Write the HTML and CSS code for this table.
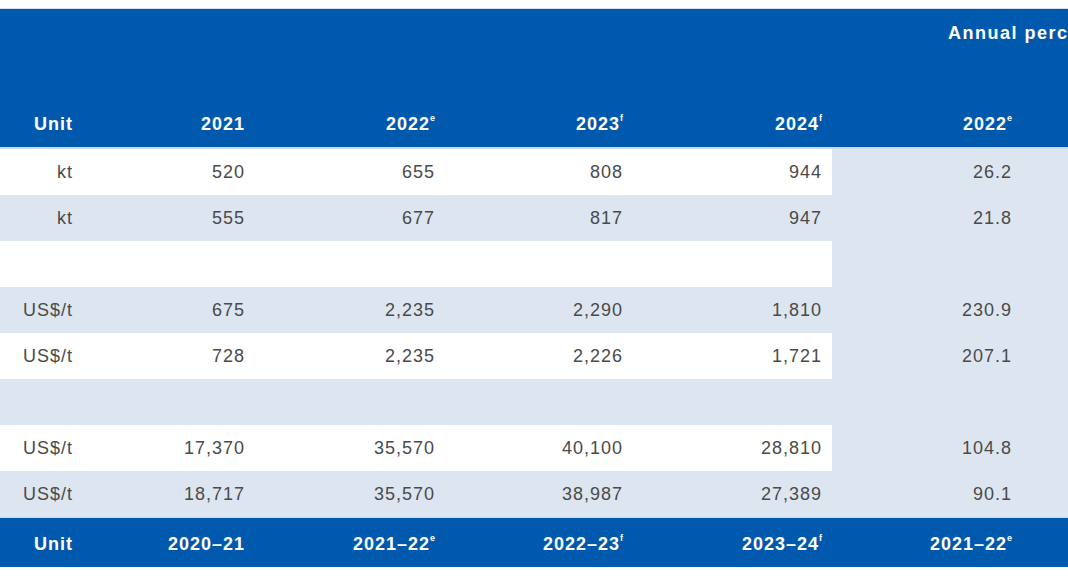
FILE: index.html
```html
<!DOCTYPE html>
<html lang="en">
<head>
<meta charset="utf-8">
<title>Table</title>
<link rel="stylesheet" href="styles.css">
</head>
<body>
<div class="frame">
<table class="data">
  <colgroup>
    <col class="c-unit">
    <col class="c-a">
    <col class="c-b">
    <col class="c-c">
    <col class="c-d">
    <col class="c-e">
    <col class="c-f">
  </colgroup>
  <thead>
    <tr class="group-row">
      <th></th><th></th><th></th><th></th><th></th>
      <th class="group" colspan="2">Annual percentage change</th>
    </tr>
    <tr class="label-row">
      <th>Unit</th>
      <th>2021</th>
      <th>2022<sup>e</sup></th>
      <th>2023<sup>f</sup></th>
      <th>2024<sup>f</sup></th>
      <th>2022<sup>e</sup></th>
      <th></th>
    </tr>
  </thead>
  <tbody>
    <tr class="w first">
      <td>kt</td><td>520</td><td>655</td><td>808</td><td>944</td><td class="pct">26.2</td><td class="pct"></td>
    </tr>
    <tr class="s">
      <td>kt</td><td>555</td><td>677</td><td>817</td><td>947</td><td class="pct">21.8</td><td class="pct"></td>
    </tr>
    <tr class="w">
      <td></td><td></td><td></td><td></td><td></td><td class="pct"></td><td class="pct"></td>
    </tr>
    <tr class="s">
      <td>US$/t</td><td>675</td><td>2,235</td><td>2,290</td><td>1,810</td><td class="pct">230.9</td><td class="pct"></td>
    </tr>
    <tr class="w">
      <td>US$/t</td><td>728</td><td>2,235</td><td>2,226</td><td>1,721</td><td class="pct">207.1</td><td class="pct"></td>
    </tr>
    <tr class="s">
      <td></td><td></td><td></td><td></td><td></td><td class="pct"></td><td class="pct"></td>
    </tr>
    <tr class="w">
      <td>US$/t</td><td>17,370</td><td>35,570</td><td>40,100</td><td>28,810</td><td class="pct">104.8</td><td class="pct"></td>
    </tr>
    <tr class="s">
      <td>US$/t</td><td>18,717</td><td>35,570</td><td>38,987</td><td>27,389</td><td class="pct">90.1</td><td class="pct"></td>
    </tr>
  </tbody>
  <tfoot>
    <tr>
      <th>Unit</th>
      <th>2020–21</th>
      <th>2021–22<sup>e</sup></th>
      <th>2022–23<sup>f</sup></th>
      <th>2023–24<sup>f</sup></th>
      <th>2021–22<sup>e</sup></th>
      <th></th>
    </tr>
  </tfoot>
</table>
</div>
</body>
</html>
```

FILE: styles.css
```css
html, body {
  margin: 0;
  padding: 0;
  background: #ffffff;
}

.frame {
  width: 1068px;
  height: 580px;
  overflow: hidden;
  padding-top: 8px;
  box-sizing: border-box;
}

.data {
  border-collapse: collapse;
  table-layout: fixed;
  width: 1068px;
  font-family: "Liberation Sans", Arial, sans-serif;
  font-size: 18px;
  letter-spacing: 1px;
  border-top: 1px solid #d3dde9;
}

.c-unit { width: 83px; }
.c-a { width: 172px; }
.c-b { width: 190px; }
.c-c { width: 188px; }
.c-d { width: 199px; }
.c-e { width: 190px; }
.c-f { width: 46px; }

th, td {
  padding: 0 10px 0 0;
  text-align: right;
  white-space: nowrap;
  overflow: hidden;
}

thead th, tfoot th {
  background: #0059ad;
  color: #ffffff;
  font-weight: bold;
  line-height: 21px;
}

.group-row th {
  height: 48px;
  vertical-align: middle;
  padding: 0;
}

.group-row th.group {
  text-align: left;
  padding-left: 116px;
  letter-spacing: 1.5px;
  overflow: visible;
}

.label-row th {
  height: 78px;
  vertical-align: bottom;
  padding-bottom: 12px;
}

sup {
  font-size: 9px;
  line-height: 0;
  vertical-align: 9px;
  letter-spacing: 0;
}

tbody td {
  height: 46px;
  color: #4a4a4a;
  line-height: 21px;
  vertical-align: middle;
}

tbody tr.first td {
  border-top: 2px solid #cdd9e8;
}

tbody tr.w td {
  background: #ffffff;
}

tbody tr.s td {
  background: #dde6f0;
}

tbody td.pct,
tbody tr.w td.pct {
  background: #dde6f0;
}

tfoot th {
  height: 46px;
  padding-top: 3px;
  vertical-align: middle;
  border-top: 1px solid #cdd9e8;
}
```
